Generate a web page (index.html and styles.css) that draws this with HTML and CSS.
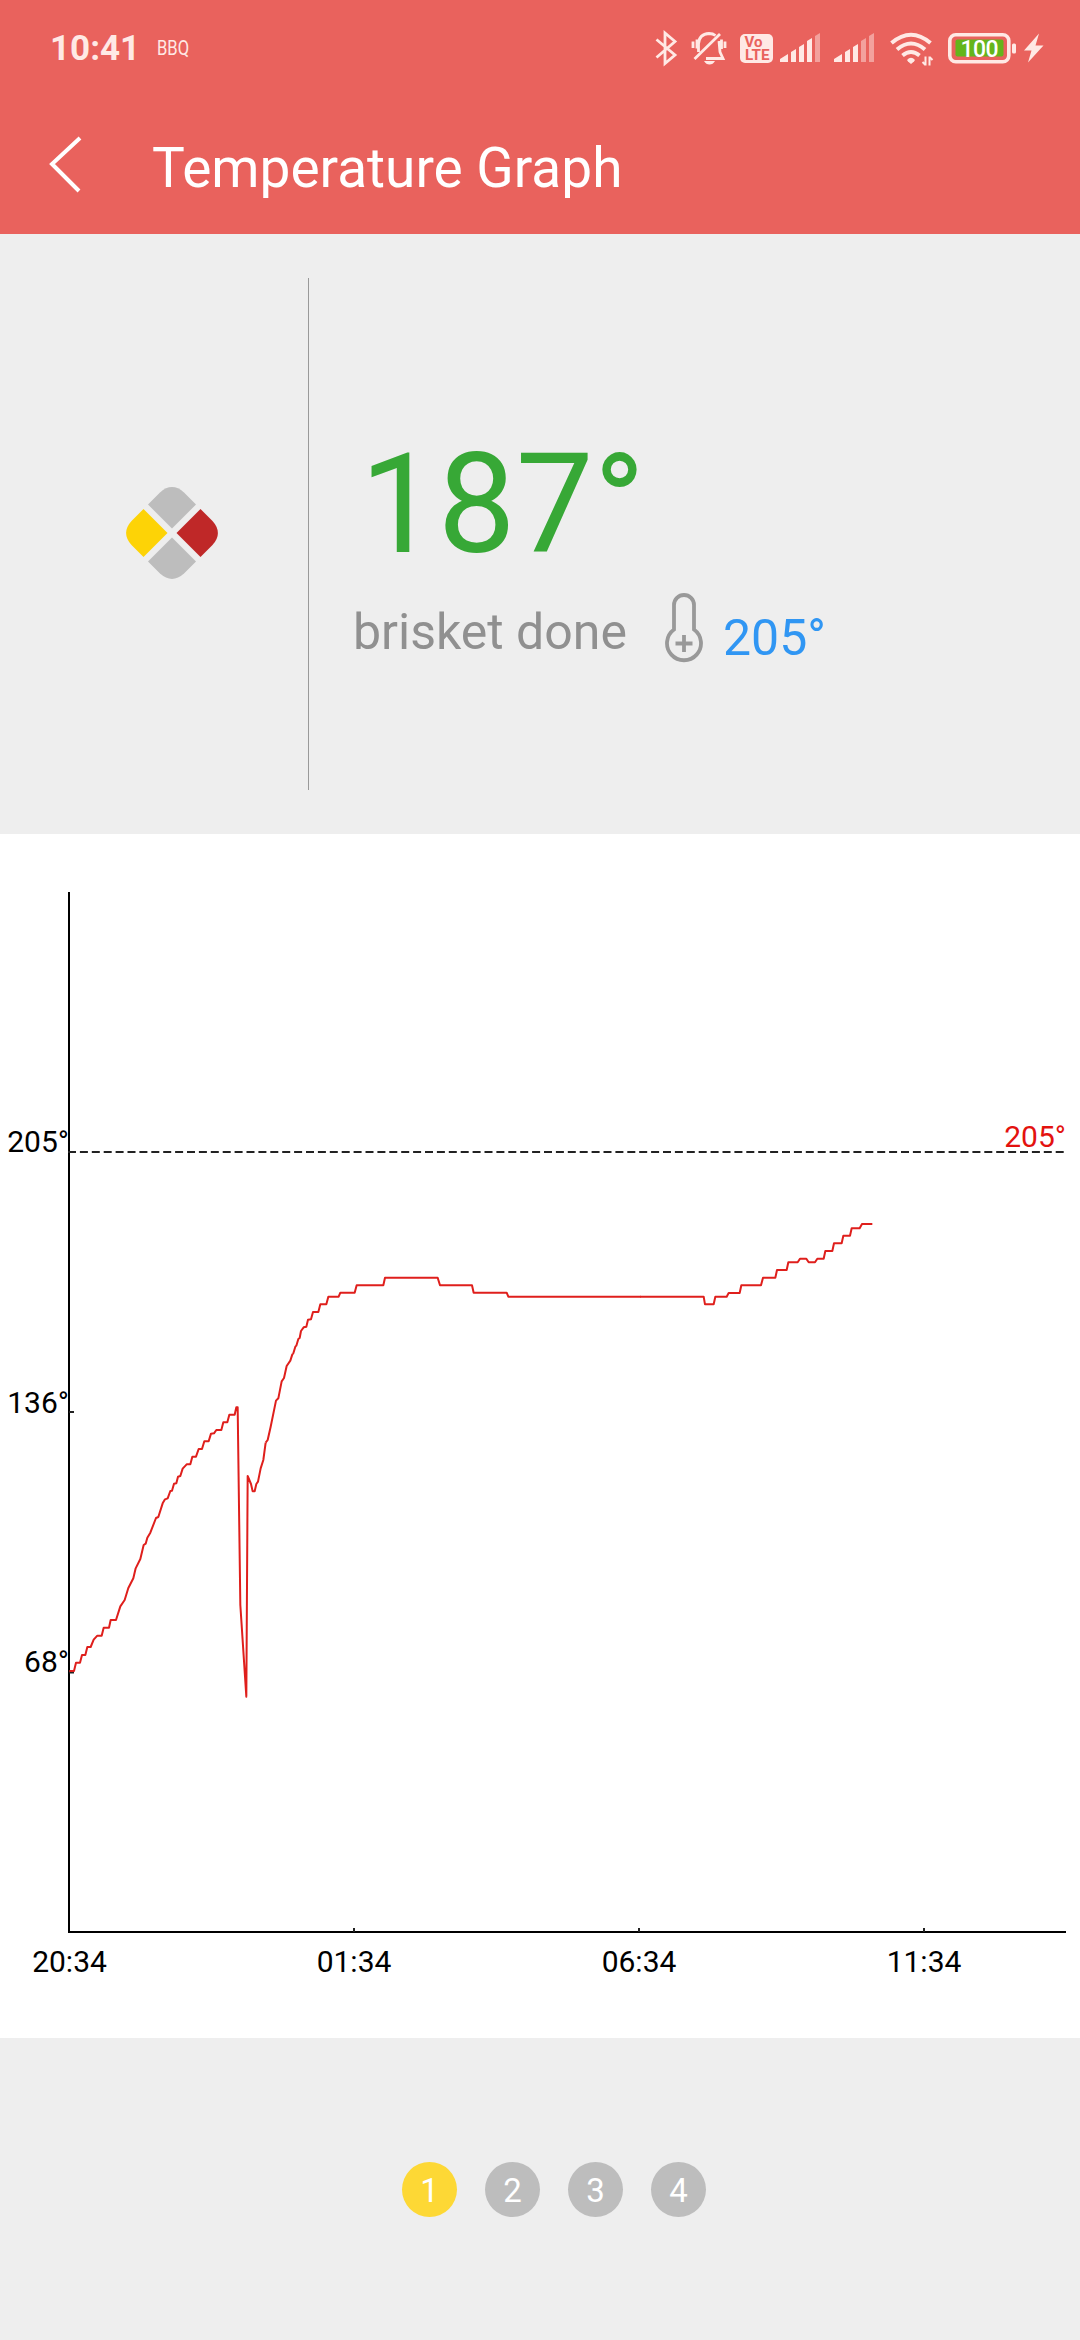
FILE: index.html
```html
<!DOCTYPE html>
<html lang="en">

<head>
    <meta charset="UTF-8">
    <meta name="viewport" content="width=device-width, initial-scale=1.0">
    <title>Temperature Graph</title>
    <link rel="stylesheet" href="styles.css">
</head>

<body>
    <header class="header">
        <div class="status">
            <span class="clock">10:41</span>
            <span class="carrier">BBQ</span>
            <svg class="status-icons" width="400" height="50" viewBox="650 20 400 50">
                <!-- bluetooth -->
                <path class="line" d="M656.500 39.500L675 55L665 63.500V33L675 41.500L656.500 57.500" />
                <!-- muted bell -->
                <path class="line" d="M698.500 52V44Q699 34 709 33.500Q713 33.500 715.500 35.500M719 41Q719.500 46 720 52L723 58.500H706M694.500 59L720 34M693 41.500V48M697 39.500V48.500M721.500 39.500V49M725 41.500V48" />
                <path class="solid" d="M704 61h11q-2 3.500-5.500 3.500t-5.500-3.500z" />
                <!-- volte -->
                <rect class="solid" x="740" y="34" width="33" height="29" rx="5" />
                <text class="volte" x="744.500" y="47" textLength="18" lengthAdjust="spacingAndGlyphs">Vo</text>
                <text class="volte" x="745" y="60" textLength="24.500" lengthAdjust="spacingAndGlyphs">LTE</text>
                <!-- signal 1 -->
                <path class="solid" d="M780 62v-3l8-5v8zM791 62v-10l5-3v13zM799 62v-15l5-3v18zM807 62v-21l5-3v24z" />
                <path class="faint" d="M815 62v-26l5-3v29z" />
                <!-- signal 2 -->
                <path class="solid" d="M834 62v-3l8-5v8zM845 62v-10l5-3v13zM853 62v-15l5-3v18z" />
                <path class="faint" d="M861 62v-21l5-3v24zM869 62v-26l5-3v29z" />
                <!-- wifi -->
                <path class="wifi" d="M891.500 43Q911 26.500 930.500 43M897 49.500Q911 37.500 925 49.500M902.500 55.500Q911 48.500 919.500 55.500" />
                <path class="solid" d="M907 60q4-4.500 8 0l-1 1.500l-3 2.500l-3-2.500z" />
                <path class="arrows" d="M925.500 56.500v9M922.500 62l3 3M929.500 65.500v-9M932.500 60l-3-3" />
                <!-- battery -->
                <rect class="battery" x="949.800" y="34.800" width="59" height="27" rx="6" />
                <rect class="charge" x="955.500" y="39.500" width="48" height="17" rx="2" />
                <text class="percent" x="960.500" y="56.500" textLength="38">100</text>
                <rect class="solid" x="1012" y="43.500" width="4" height="10" rx="1.500" />
                <path class="solid" d="M1039 33.500L1024 50.500H1031.500L1028 62.500L1043.500 45.500H1035.500Z" />
            </svg>
        </div>
        <div class="toolbar">
            <svg class="back" width="34" height="58" viewBox="0 0 34 58">
                <path d="M31 3L3 29L30 56" />
            </svg>
            <h1 class="title">Temperature Graph</h1>
        </div>
    </header>

    <section class="summary">
        <div class="probe">
            <svg width="92" height="92" viewBox="0 0 92 92">
                <path fill="#bdbdbd" d="M46 41.500L22 17.500L34 5.500Q46 -5.300 58 5.500L70 17.500Z" />
                <path fill="#bf2828" transform="rotate(90 46 46)" d="M46 41.500L22 17.500L34 5.500Q46 -5.300 58 5.500L70 17.500Z" />
                <path fill="#bdbdbd" transform="rotate(180 46 46)" d="M46 41.500L22 17.500L34 5.500Q46 -5.300 58 5.500L70 17.500Z" />
                <path fill="#fdd306" transform="rotate(270 46 46)" d="M46 41.500L22 17.500L34 5.500Q46 -5.300 58 5.500L70 17.500Z" />
            </svg>
        </div>
        <div class="details">
            <div class="current">187°</div>
            <div class="goal">
                <span class="goal-name">brisket done</span>
                <svg class="thermo" width="38" height="70" viewBox="0 0 38 70">
                    <path d="M9 36.500V12a10 10 0 0 1 20 0V36.500A17 17 0 1 1 9 36.500ZM19 42V59M10.500 50.500H27.500" />
                </svg>
                <span class="goal-temp">205°</span>
            </div>
        </div>
    </section>

    <section class="graph">
        <svg width="1080" height="1204" viewBox="0 0 1080 1204">
            <path class="axis" d="M69 58V1098H1066" />
            <path class="tick" d="M69 578H74M69 838.500H74M354 1094V1098M639 1094V1098M924 1094V1098" />
            <path class="limit" d="M68 318H1066" />
            <g class="label" text-anchor="end">
                <text x="69" y="318">205°</text>
                <text x="69" y="579">136°</text>
                <text x="69" y="838">68°</text>
                <text class="limit-label" x="1066" y="313">205°</text>
            </g>
            <g class="label" text-anchor="middle">
                <text x="69.500" y="1138">20:34</text>
                <text x="354" y="1138">01:34</text>
                <text x="639" y="1138">06:34</text>
                <text x="924" y="1138">11:34</text>
            </g>
            <!-- warm up and probe drop -->
            <polyline class="temp" transform="translate(0 526) scale(.33333)" points="208,933 222,933 228,908 240,908 246,885 256,885 262,861 272,861 281,839 292,827 305,827 311,803 327,803 332,780 348,780 361,739 374,720 385,684 400,655 407,625 421,597 431,555 437,551 442,533 451,518 468,474 475,471 488,430 495,418 503,415 511,393 516,392 522,371 529,370 534,350 541,348 548,326 560,313 571,313 577,290 588,290 596,267 606,267 613,244 626,244 633,221 642,220 649,210 664,210 670,187 682,187 688,164 704,164 709,142 713,142 721,735 739,1010 743,348 753,372 758,394 764,394 769,372 774,365 782,325 790,300 797,248" />
            <!-- climb and stall -->
            <polyline class="temp" transform="translate(220 406) scale(.33333)" points="137,608 143,600 152,560 168,482 175,475 185,424 192,414 200,378 211,362 217,343 220,340 226,320 229,317 235,297 239,294 243,273 251,262 259,260 264,239 273,238 279,216 295,216 301,193 319,193 325,170 356,170 361,158 404,158 410,136 490,136 495,113 653,113 660,136 756,136 761,158 860,158 865,170 1262,170" />
            <!-- finish -->
            <polyline class="temp" transform="translate(640 346) scale(.33333)" points="0,350 191,350 195,373 221,373 226,350 260,350 266,339 299,339 304,316 363,316 369,293 406,293 411,270 440,270 445,247 473,247 480,236 499,236 506,247 525,247 532,236 551,236 556,213 577,213 582,190 605,190 610,167 630,167 635,145 659,145 666,132 697,132" />
        </svg>
    </section>

    <nav class="pager">
        <span class="page active">1</span>
        <span class="page">2</span>
        <span class="page">3</span>
        <span class="page">4</span>
    </nav>
</body>

</html>
```
FILE: styles.css
```css
body {
    margin: 0;
    width: 1080px;
    height: 2340px;
    background: #eeeeee;
    font-family: Roboto, "Noto Sans", sans-serif;
}

svg {
    display: block;
    flex-shrink: 0;
}

.header {
    height: 234px;
    background: #e9625d;
    color: white;
}

.status {
    display: flex;
    align-items: flex-start;
    height: 96px;
    color: #ffe9e5;
}

.clock {
    width: 107px;
    padding-left: 50px;
    line-height: 98px;
    font-size: 35px;
    font-weight: bold;
}

.carrier {
    width: 493px;
    line-height: 97px;
    font-size: 20px;
    transform: scaleX(0.83);
    transform-origin: left;
}

.status-icons {
    padding-top: 20px;
}

.line {
    fill: none;
    stroke: #ffe9e5;
    stroke-width: 2.8;
}

.solid {
    fill: #ffe9e5;
}

.faint {
    fill: #f3a19d;
}

.volte {
    font-size: 15.5px;
    font-weight: bold;
    fill: #e9625d;
}

.wifi {
    fill: none;
    stroke: #ffe9e5;
    stroke-width: 4;
}

.arrows {
    fill: none;
    stroke: #ffe9e5;
    stroke-width: 2;
}

.battery {
    fill: none;
    stroke: #ffe9e5;
    stroke-width: 3.6;
}

.charge {
    fill: #64b51b;
}

.percent {
    font-size: 23px;
    font-weight: 500;
    fill: white;
}

.toolbar {
    display: flex;
    align-items: flex-start;
    padding-left: 49px;
}

.back {
    padding-top: 39px;
    fill: none;
    stroke: white;
    stroke-width: 4;
}

.title {
    margin: 0 0 0 69px;
    line-height: 145px;
    font-size: 55px;
    font-weight: normal;
}

.summary {
    display: flex;
    height: 600px;
}

.probe {
    width: 182px;
    height: 509px;
    margin-top: 44px;
    padding: 0 0 3px 126px;
    border-right: 1px solid #999999;
    display: flex;
    align-items: center;
}

.details {
    padding: 191px 0 0 44px;
}

.current {
    padding-left: 7px;
    line-height: 160px;
    font-size: 138.5px;
    color: #37a836;
}

.goal {
    display: flex;
    align-items: center;
    height: 94px;
    font-size: 50px;
}

.goal-name {
    width: 312px;
    color: #909090;
}

.thermo {
    width: 38px;
    padding-bottom: 9px;
    fill: none;
    stroke: #999999;
    stroke-width: 3.8;
}

.goal-temp {
    padding: 12px 0 0 20px;
    color: #3096f3;
}

.graph {
    height: 1204px;
    background: white;
}

.axis {
    fill: none;
    stroke: black;
    stroke-width: 2;
}

.tick {
    stroke: #222222;
    stroke-width: 2;
}

.limit {
    stroke: #222222;
    stroke-width: 2;
    stroke-dasharray: 8 3.9;
}

.label {
    font-size: 30px;
    fill: black;
}

.limit-label {
    fill: #e3120f;
}

.temp {
    fill: none;
    stroke: #df1f1c;
    stroke-width: 2;
    stroke-linejoin: round;
    vector-effect: non-scaling-stroke;
}

.pager {
    display: flex;
    gap: 28px;
    padding: 124px 0 0 402px;
}

.page {
    width: 55px;
    height: 55px;
    border-radius: 50%;
    background: #bdbdbd;
    color: white;
    font-size: 33px;
    line-height: 57px;
    text-align: center;
}

.active {
    background: #fdd835;
}
```
